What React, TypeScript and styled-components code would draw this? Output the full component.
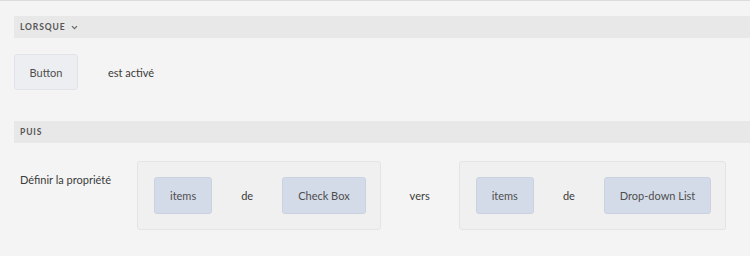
import React from 'react';
import styled, { createGlobalStyle } from 'styled-components';

const GlobalStyle = createGlobalStyle`
  html, body {
    margin: 0;
    padding: 0;
    background: #f4f4f4;
  }
`;

const Page = styled.div`
  box-sizing: border-box;
  width: 750px;
  height: 256px;
  overflow: hidden;
  background: #f4f4f4;
  border-top: 1px solid #dcdcdc;
  padding: 15px 0 0 14px;
  font-family: 'Lato', 'Open Sans', sans-serif;
  font-size: 11px;
  color: #3a3a3a;
  white-space: nowrap;
`;

const SectionHeader = styled.div`
  display: flex;
  align-items: center;
  gap: 5px;
  height: 22px;
  padding-left: 6px;
  background: #e8e8e8;
  font-size: 8.5px;
  font-weight: 700;
  letter-spacing: 0.9px;
  color: #555555;
`;

const Chevron = styled.svg`
  width: 7px;
  height: 5px;
  margin-top: 1px;
  color: #666666;
`;

const Row = styled.div<{ top: number; bottom: number }>`
  display: flex;
  align-items: center;
  gap: 30px;
  margin: ${(props) => props.top}px 0 ${(props) => props.bottom}px;
`;

const ActionRow = styled.div`
  display: flex;
  align-items: center;
  margin-top: 18px;
  & > * {
    flex: none;
  }
`;

const RowLabel = styled.div`
  align-self: flex-start;
  width: 117px;
  margin-top: 12px;
  padding-left: 6px;
`;

const Chip = styled.div<{ tone: 'neutral' | 'blue' }>`
  box-sizing: border-box;
  flex: none;
  display: flex;
  align-items: center;
  justify-content: center;
  height: 37px;
  padding: 0 15px;
  border-radius: 3px;
  color: #4e4e4e;
  background: ${(props) => (props.tone === 'blue' ? '#d4dbe8' : '#eceef2')};
  border: 1px solid
    ${(props) => (props.tone === 'blue' ? '#cad2e0' : '#e1e3e8')};
`;

const TriggerChip = styled(Chip)`
  height: 36px;
  width: 64px;
  padding: 0;
`;

const Box = styled.div`
  box-sizing: border-box;
  display: flex;
  align-items: center;
  gap: 29px;
  height: 69px;
  padding: 0 14px 0 16px;
  background: #f0f0f0;
  border: 1px solid #e4e4e4;
  border-radius: 3px;
`;

const Word = styled.span`
  flex: none;
  color: #3a3a3a;
`;

const Spacer = styled.div`
  width: 29px;
`;

const App: React.FC = () => (
  <>
    <GlobalStyle />
    <Page>
      <SectionHeader>
        LORSQUE
        <Chevron viewBox='0 0 7 5' fill='none'>
          <path d='M1 1.2l2.5 2.5L6 1.2' stroke='currentColor' strokeWidth='1.2' />
        </Chevron>
      </SectionHeader>
      <Row top={16} bottom={31}>
        <TriggerChip tone='neutral'>Button</TriggerChip>
        <Word>est activé</Word>
      </Row>
      <SectionHeader>PUIS</SectionHeader>
      <ActionRow>
        <RowLabel>Définir la propriété</RowLabel>
        <Box>
          <Chip tone='blue'>items</Chip>
          <Word>de</Word>
          <Chip tone='blue'>Check Box</Chip>
        </Box>
        <Spacer />
        <Word>vers</Word>
        <Spacer />
        <Box>
          <Chip tone='blue'>items</Chip>
          <Word>de</Word>
          <Chip tone='blue'>Drop-down List</Chip>
        </Box>
      </ActionRow>
    </Page>
  </>
);

export default App;
